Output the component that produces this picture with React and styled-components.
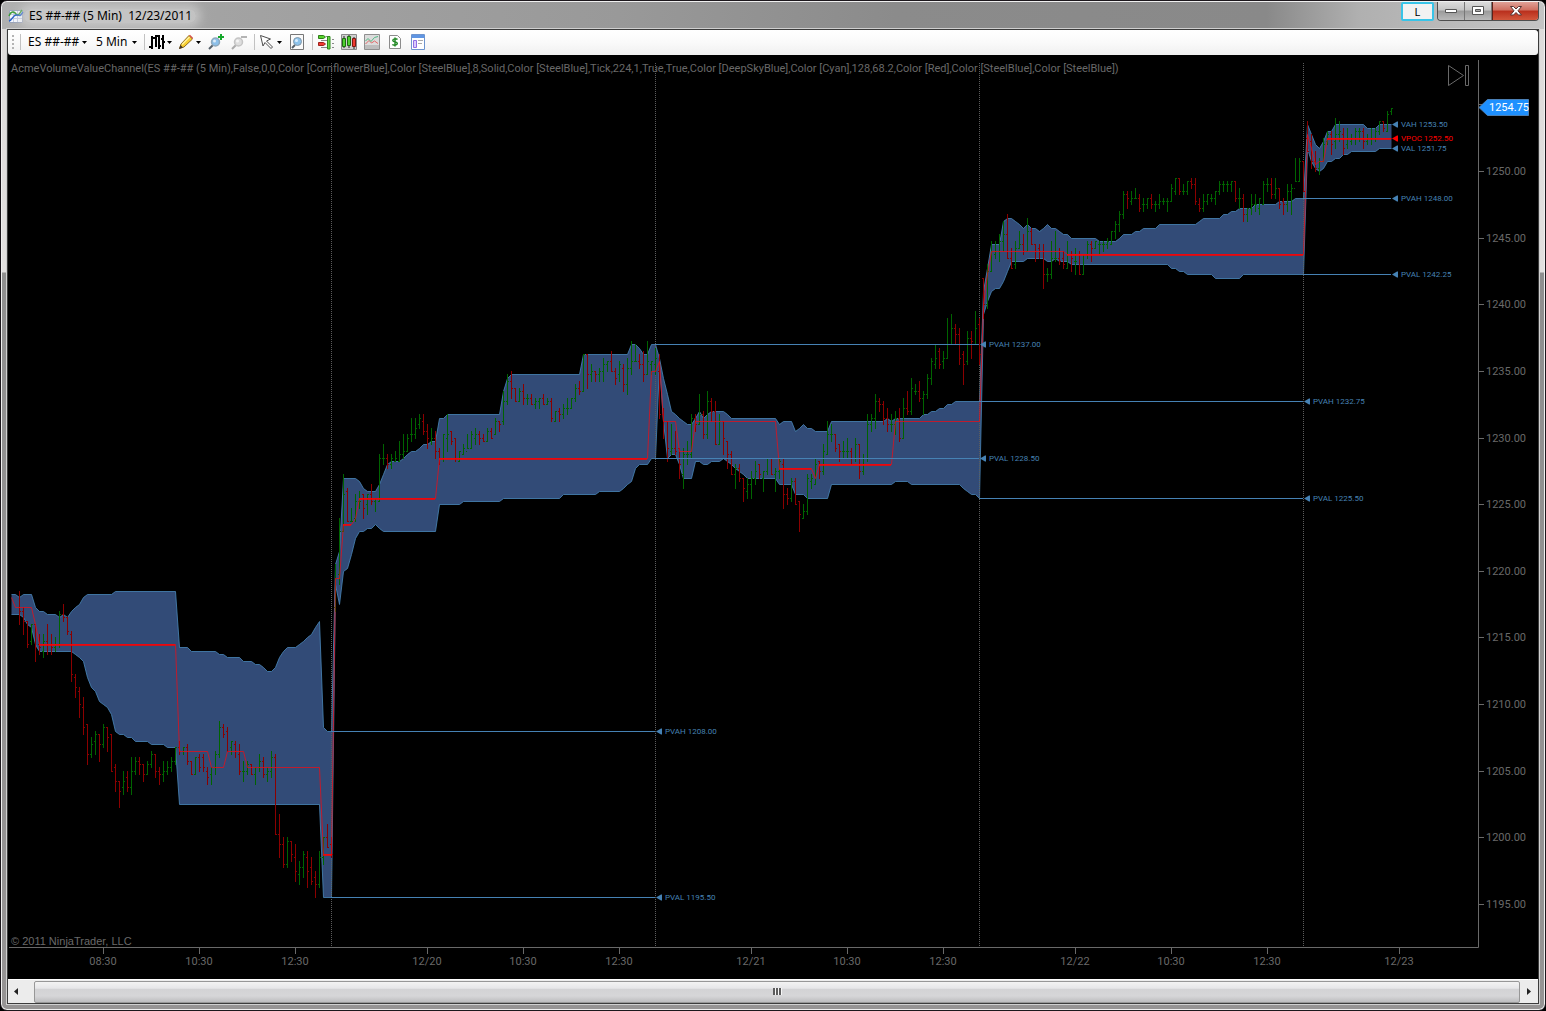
import styled, { createGlobalStyle } from 'styled-components';

const GRAY = '#696969';
const STEEL = '#4682b4';
const BAR_STEP = 4;
const POINT_HEIGHT = 13.328;

const INDICATOR =
  'AcmeVolumeValueChannel(ES ##-## (5 Min),False,0,0,Color [CornflowerBlue],Color [SteelBlue],8,Solid,Color [SteelBlue],Tick,224,1,True,True,Color [DeepSkyBlue],Color [Cyan],128,68.2,Color [Red],Color [SteelBlue],Color [SteelBlue])';

// Each session holds its prices as ticks (0.25) below `base`.
// bars: high low open close, channel lines: x:ticks
const sessions = [
  {
    base: 1220,
    start: 19,
    bars: `6 16 11 12,11 19 12 15,15 23 15 22,16 22 21 16,16 27 16 23,19 25 22 23,19 26 24 21,16 25 21 22,19 25 22 23,20 24 23 22,
      12 23 22 13,10 15 13 14,14 19 14 18,18 33 19 31,31 38 32 35,35 44 36 40,38 49 41 47,46 58 46 55,50 56 55 52,48 55 51 49,
      49 57 49 52,46 53 52 47,47 54 47 50,49 60 49 60,58 66 59 63,63 71 63 66,60 67 65 63,60 66 62 65,56 67 65 60,56 61 60 57,
      56 61 57 58,58 63 58 61,57 61 61 58,54 59 58 55,55 62 55 60,59 64 60 61,57 63 61 60,57 61 60 59,56 60 59 57,53 58 57 53,
      51 55 53 54,53 55 54 53,52 58 53 57,57 61 57 61,56 61 61 56,55 60 56 59,55 60 56 59,59 64 60 62,59 64 61 59,54 61 59 55,
      45 56 55 47,46 50 47 49,47 54 48 54,51 55 53 51,51 56 52 54,52 61 55 60,57 63 60 60,57 61 60 58,58 61 58 61,59 64 61 59,
      55 60 59 57,56 62 57 61,59 63 61 60,54 62 60 56,55 79 56 79,73 86 79 82,80 89 82 88,80 89 88 81,81 87 81 85,82 93 86 90,
      87 94 91 89,84 92 89 85,84 95 86 90,86 94 89 93,90 98 92 94,84 95 94 86,80 88 86 80,76 83 80 83,80 86 82 85`,
    upper:
      '11:7 15:7 19:8 23:7 31:7 35:11 39:12 43:12 47:13 55:13 59:14 63:13 67:14 71:12 75:11 79:10 83:8 87:7 111:7 115:6 175:6 179:23 187:23 191:24 215:24 219:25 223:25 227:26 239:26 243:27 251:27 255:28 259:28 263:29 267:30 271:30 275:29 279:26 283:24 287:23 295:23 299:22 303:21 307:20 311:19 315:17 319:15 323:47 327:48 331:48',
    lower:
      '11:13 19:13 23:14 27:16 31:17 35:22 39:24 71:24 75:25 79:26 83:27 87:32 91:35 95:36 99:39 103:40 107:41 111:43 115:48 119:49 123:49 127:50 131:50 135:51 147:51 151:52 163:52 167:53 175:53 179:70 319:70 323:98 331:98',
    poc: '11:8 15:11 31:11 35:16 39:22 175:22 179:54 207:54 211:59 223:59 227:54 243:54 247:59 319:59 323:85 331:85',
    strong: ['39:22 175:22', '323:85 332:85'],
  },
  {
    base: 1238,
    start: 335,
    bars: `70 84 83 74,56 76 73 60,43 60 60 49,47 57 48 57,53 57 57 57,49 57 56 51,48 53 51 51,49 56 49 53,49 55 52 49,46 52 49 51,
      50 54 51 50,37 51 51 38,34 40 38 38,37 41 38 40,37 41 40 38,36 39 39 38,33 39 39 37,31 38 37 36,31 36 36 32,26 33 31 31,
      26 32 31 29,25 29 28 26,25 31 27 30,28 35 30 32,29 34 33 32,30 38 32 36,35 40 36 38,31 39 38 31,25 36 32 31,30 34 30 33,
      32 39 32 38,36 39 39 36,34 37 37 35,31 35 36 35,30 35 35 31,29 34 32 31,30 34 31 32,31 33 32 33,29 33 33 30,29 32 30 32,
      26 31 31 27,27 30 27 28,18 28 27 21,13 22 21 15,12 20 15 17,17 21 17 21,17 21 21 18,16 22 18 20,19 22 20 20,19 22 20 22,
      20 23 22 21,20 23 21 20,19 22 20 22,20 22 22 21,20 27 21 26,24 27 27 24,23 27 24 25,22 26 25 23,20 25 23 23,20 23 23 20,
      16 21 20 17,15 19 17 18,7 18 18 7,7 17 7 13,10 15 13 12,12 15 12 13,11 15 13 12,8 15 12 10,9 12 10 9,6 12 9 12,
      11 16 12 14,9 15 13 10,10 18 11 16,8 19 16 11,3 13 11 9,4 9 9 9,7 11 9 10,6 15 10 13,3 13 13 9,9 13 10 9,5 13 10 8`,
    upper:
      '335:70 339:66 343:44 355:44 359:45 363:47 367:48 375:48 379:46 383:43 387:40 391:39 399:39 403:38 407:37 411:36 415:36 419:35 423:34 427:34 431:33 435:33 439:26 443:26 447:25 499:25 503:18 507:14 511:13 579:13 583:7 627:7 631:4 635:4 639:5 643:7 647:7 651:4 655:4',
    lower:
      '335:76 339:82 343:72 347:71 351:67 355:62 359:60 363:60 367:59 371:59 375:58 379:59 383:60 435:60 439:52 459:52 463:51 499:51 503:50 559:50 563:49 595:49 599:48 619:48 623:47 627:46 631:45 635:41 639:40 647:40 651:38 655:38',
    poc: '335:74 339:74 343:58 351:58 355:56 359:50 435:50 439:38 647:38 651:12 655:12',
    strong: ['343:58 351:58', '359:50 435:50', '439:38 647:38'],
  },
  {
    base: 1238,
    start: 659,
    bars: `7 26 12 25,23 32 25 27,27 39 27 35,28 37 36 35,30 37 35 36,35 44 35 40,35 47 43 37,33 40 37 37,25 38 37 26,25 30 26 28,
      19 28 28 25,24 32 25 31,18 32 31 21,20 27 21 24,21 34 24 34,25 34 34 27,27 37 27 32,33 41 33 37,36 43 37 43,40 47 43 41,
      40 45 41 44,44 51 44 47,44 50 48 46,42 50 46 44,39 46 44 42,40 44 40 43,42 48 44 42,38 43 42 38,38 43 38 43,41 48 43 42,
      38 44 42 39,38 53 40 49,47 52 49 50,44 51 50 45,44 52 45 52,51 60 51 55,52 56 56 54,43 55 54 44,43 47 45 44,38 46 46 40,
      39 44 39 42,34 43 42 36,27 37 37 31,28 33 31 31,31 36 31 35,34 39 34 36,33 38 36 36,32 38 36 36,35 40 36 38,32 39 38 34,
      34 44 34 42,37 43 42 38,25 39 38 28,25 30 28 26,19 29 26 21,20 24 21 22,21 28 22 26,23 30 26 28,25 30 28 28,24 31 28 26,
      23 33 26 32,20 32 32 23,18 25 23 24,14 25 24 17,16 19 18 18,15 21 18 20,18 25 20 19,13 20 19 14,8 16 14 9,4 11 10 8,
      5 11 6 10,6 11 9 8,-4 8 8 4,-5 4 4 -1,-2 4 -1 1,-1 10 1 8,6 16 7 10,0 10 9 2,0 8 2 3,-6 4 4 -1,-4 10 -2 7`,
    upper:
      '659:8 663:14 667:19 671:24 675:25 679:26 683:27 687:28 691:28 695:26 699:24 703:26 707:25 711:24 723:24 727:25 731:26 775:26 779:28 783:27 791:27 795:30 799:29 803:28 807:29 811:29 815:30 827:30 831:27 883:27 887:26 891:27 895:26 919:26 923:25 927:25 931:24 935:24 939:23 943:23 947:22 951:22 955:21 979:21',
    lower:
      '659:10 663:27 667:38 671:37 675:37 679:40 683:44 691:44 695:39 699:39 703:40 707:40 711:39 719:39 723:38 727:39 731:40 735:41 739:42 743:43 747:44 775:44 779:46 791:46 795:49 803:49 807:50 827:50 831:46 891:46 895:45 907:45 911:46 959:46 963:47 967:48 971:49 975:49 979:50',
    poc: '659:9 663:27 675:27 679:36 691:36 695:27 775:27 779:41 811:41 815:44 819:40 891:40 895:27 979:27',
    strong: ['779:41 811:41', '819:40 891:40'],
  },
  {
    base: 1250,
    start: 983,
    bars: `32 44 32 40,28 41 40 30,21 30 30 24,21 26 25 24,19 27 24 21,15 24 21 19,13 26 19 26,23 29 26 29,21 29 28 23,18 23 23 22,
      19 25 22 24,14 24 24 18,17 22 18 22,22 27 22 24,22 26 23 24,22 35 24 31,29 33 31 31,21 32 31 26,18 27 26 26,23 28 26 27,
      24 29 26 28,21 29 29 25,24 30 25 26,23 31 27 27,24 31 25 31,25 31 31 25,21 26 25 22,21 27 22 23,21 23 23 21,21 25 22 22,
      21 24 22 22,20 23 22 21,18 22 22 18,15 20 18 16,12 18 16 13,6 14 13 7,6 11 7 8,6 10 9 8,5 8 8 8,7 12 8 11,
      8 12 10 10,8 11 10 8,7 11 8 10,9 12 10 10,7 11 10 9,8 10 9 9,8 12 9 9,4 9 9 5,2 7 6 2,2 7 2 6,
      4 7 6 6,3 7 6 3,2 5 3 4,2 10 4 9,8 12 10 11,7 12 11 9,7 10 9 7,7 9 8 8,6 10 8 6,3 7 6 4,
      3 6 4 4,3 6 4 4,3 6 4 3,3 9 3 8,5 11 8 8,7 15 8 13,11 15 13 11,7 13 11 10,7 12 10 10,8 13 11 8,
      3 10 10 4,2 6 4 4,2 8 4 7,2 8 7 5,5 11 5 10,8 13 9 10,4 12 10 6,4 13 6 5,-4 3 5 3,-4 3 3 -3,-3 6 -3 6`,
    upper:
      '983:36 987:29 991:22 999:22 1003:15 1007:14 1011:14 1015:15 1019:16 1023:17 1027:16 1031:17 1035:17 1039:18 1043:17 1047:16 1051:17 1055:17 1059:18 1063:19 1067:19 1071:20 1095:20 1099:21 1115:21 1119:20 1123:19 1131:19 1135:18 1139:18 1143:17 1155:17 1159:16 1195:16 1199:15 1203:14 1219:14 1223:13 1227:13 1231:12 1235:12 1239:11 1251:11 1255:10 1275:10 1279:9 1291:9 1295:8 1303:8',
    lower:
      '983:43 987:39 991:36 995:35 999:35 1003:33 1007:30 1011:27 1023:27 1027:26 1043:26 1047:27 1051:27 1055:26 1059:27 1067:27 1071:28 1167:28 1171:29 1175:29 1179:30 1183:30 1187:31 1211:31 1215:32 1239:32 1243:31 1303:31',
    poc: '983:40 987:31 991:24 1063:24 1067:25 1303:25',
    strong: ['1067:25 1303:25'],
  },
  {
    base: 1262.5,
    start: 1307,
    bars: `35 44 40 44,39 49 41 47,44 50 47 49,46 51 49 47,40 47 47 42,38 42 41 39,38 45 39 42,34 43 41 39,35 41 39 38,37 45 39 43,
      37 43 42 40,39 42 41 40,37 42 40 38,37 41 38 38,37 43 38 41,39 42 41 40,37 42 40 40,37 41 40 38,35 39 38 35,35 38 35 37,
      32 38 38 33,31 33 32 31`,
    upper: '1307:36 1311:39 1315:42 1319:43 1323:41 1327:38 1331:38 1335:36 1363:36 1367:37 1375:37 1379:36 1391:36',
    lower:
      '1307:43 1311:47 1315:49 1319:50 1323:49 1327:47 1331:47 1335:46 1339:46 1343:45 1347:45 1351:44 1375:44 1379:43 1391:43',
    poc: '1307:39 1311:43 1315:48 1319:47 1323:47 1327:40 1391:40',
    strong: ['1327:40 1391:40'],
  },
];

const levels = [
  { from: 331, to: 655, price: 1208, label: 'PVAH 1208.00' },
  { from: 331, to: 655, price: 1195.5, label: 'PVAL 1195.50' },
  { from: 655, to: 979, price: 1237, label: 'PVAH 1237.00' },
  { from: 655, to: 979, price: 1228.5, label: 'PVAL 1228.50' },
  { from: 979, to: 1303, price: 1232.75, label: 'PVAH 1232.75' },
  { from: 979, to: 1303, price: 1225.5, label: 'PVAL 1225.50' },
  { from: 1303, to: 1391, price: 1248, label: 'PVAH 1248.00' },
  { from: 1303, to: 1391, price: 1242.25, label: 'PVAL 1242.25' },
  { from: 1391, to: 1391, price: 1253.5, label: 'VAH 1253.50' },
  { from: 1391, to: 1391, price: 1252.5, label: 'VPOC 1252.50', color: '#ff0000' },
  { from: 1391, to: 1391, price: 1251.75, label: 'VAL 1251.75' },
];

const prices = [1250, 1245, 1240, 1235, 1230, 1225, 1220, 1215, 1210, 1205, 1200, 1195];

const times = [
  [103, '08:30'],
  [199, '10:30'],
  [295, '12:30'],
  [427, '12/20'],
  [523, '10:30'],
  [619, '12:30'],
  [751, '12/21'],
  [847, '10:30'],
  [943, '12:30'],
  [1075, '12/22'],
  [1171, '10:30'],
  [1267, '12:30'],
  [1399, '12/23'],
];

function priceY(price) {
  return Math.round(171 + (1250 - price) * POINT_HEIGHT);
}

function parseLine(line, base) {
  return line.split(' ').map((point) => {
    const [x, ticks] = point.split(':').map(Number);
    return [x, priceY(base - ticks / 4)];
  });
}

function toPoints(points) {
  return points.map(([x, y]) => `${x + 0.5},${y + 0.5}`).join(' ');
}

function joinLines(key) {
  return sessions.flatMap((session) => parseLine(session[key], session.base));
}

function barPaths() {
  const paths = { up: '', down: '' };
  sessions.forEach(({ bars, base, start }) => {
    bars.split(',').forEach((bar, index) => {
      const [high, low, open, close] = bar
        .trim()
        .split(' ')
        .map((ticks) => priceY(base - ticks / 4));
      const x = start + index * BAR_STEP;
      const path = `M${x} ${high}h1V${low + 1}h-1zM${x - 1} ${open}h1v1h-1zM${x + 1} ${close}h1v1h-1z`;
      paths[close <= open ? 'up' : 'down'] += path;
    });
  });
  return paths;
}

function Chart() {
  const upper = joinLines('upper');
  const lower = joinLines('lower');
  const poc = joinLines('poc');
  const bars = barPaths();

  return (
    <ChartSvg viewBox="8 55 1530 924" role="img" aria-label="ES 5 Min chart">
      <polygon points={toPoints([...upper, ...[...lower].reverse()])} fill="#6495ed" fillOpacity="0.5" />
      <polyline points={toPoints(upper)} fill="none" stroke={STEEL} strokeOpacity="0.85" />
      <polyline points={toPoints(lower)} fill="none" stroke={STEEL} strokeOpacity="0.85" />

      {[331, 655, 979, 1303].map((x) => (
        <path key={x} d={`M${x + 0.5} 63V947`} stroke="#5c5c5c" strokeDasharray="1 1" shapeRendering="crispEdges" />
      ))}

      <path d={bars.up} fill="#006400" shapeRendering="crispEdges" />
      <path d={bars.down} fill="#8b0000" shapeRendering="crispEdges" />

      <polyline points={toPoints(poc)} fill="none" stroke="#e1101c" strokeOpacity="0.8" />
      {sessions.map(({ strong, base }) =>
        strong.map((line) => {
          const [[x1, y], [x2]] = parseLine(line, base);
          return <rect key={line} x={x1} y={y} width={x2 - x1} height="2" fill="#ff0000" fillOpacity="0.75" />;
        }),
      )}

      {levels.map(({ from, to, price, label, color = STEEL }) => {
        const y = priceY(price);
        return (
          <g key={label} fill={color}>
            <rect x={from} y={y} width={to - from} height="1" />
            <path d={`M${to + 1} ${y + 0.5}l5 -3h1v6h-1z`} />
            <SmallText x={to + 10} y={y + 3}>
              {label}
            </SmallText>
          </g>
        );
      })}

      <path d="M9 947.5H1478.5V60" fill="none" stroke={GRAY} />
      <path d="M1478 104.5h6" stroke={GRAY} />
      {prices.map((price) => (
        <g key={price}>
          <path d={`M1478 ${priceY(price) + 0.5}h6`} stroke={GRAY} />
          <AxisText x="1486" y={priceY(price) + 4}>
            {price.toFixed(2)}
          </AxisText>
        </g>
      ))}
      {times.map(([x, label]) => (
        <g key={x}>
          <path d={`M${x + 0.5} 948v6`} stroke={GRAY} />
          <AxisText x={x} y="965" textAnchor="middle">
            {label}
          </AxisText>
        </g>
      ))}

      <path d="M1479 107.5L1487.500 99.500H1528.500V115.500H1487.500Z" fill="#1e90ff" stroke="#4a7fb5" />
      <AxisText x="1489" y="111" fill="#ffffff">
        1254.75
      </AxisText>
      <path d="M1448.500 65.500V85.500L1463.500 75.500ZM1465.500 65.500H1468.500V85.500H1465.500Z" fill="none" stroke={GRAY} />

      <AxisText x="11" y="72">
        {INDICATOR}
      </AxisText>
      <CopyrightText x="11" y="945">
        © 2011 NinjaTrader, LLC
      </CopyrightText>
    </ChartSvg>
  );
}

function Icon({ children }) {
  return (
    <svg width="16" height="16" viewBox="0 0 16 16" fill="none" aria-hidden="true">
      {children}
    </svg>
  );
}

function Caret() {
  return (
    <svg width="5" height="3" viewBox="0 0 5 3" aria-hidden="true">
      <path d="M0 0h5L2.500 3z" fill="#000" />
    </svg>
  );
}

function AppIcon() {
  return (
    <Icon>
      <path d="M1.500 2.500h13v12h-13z" fill="#f4f7fd" stroke="#9aa3b8" />
      <path d="M5.500 3v11M9.500 3v11M2 6.500h12M2 10.500h12" stroke="#c3cce0" />
      <path d="M1 8C3 3 6 3 8 6s4-1 6-4" stroke="#3b9c35" strokeWidth="1.500" />
      <path d="M1 13C5 12 5 6 9 7s3 1 6-3" stroke="#2862c8" strokeWidth="1.500" />
    </Icon>
  );
}

function BarsIcon() {
  return (
    <Icon>
      <path d="M2 2h2v13H2zM6 1h2v12H6zM13 1h2v14h-2z" fill="#000" />
      <path d="M0 12h2v2H0zM4 3h2v2H4zM8 1h3v2H8zM9 2h2v13H9zM11 11h1v2h-1zM12 4h1v2h-1zM15 7h1v2h-1z" fill="#000" />
    </Icon>
  );
}

function PencilIcon() {
  return (
    <Icon>
      <path d="M1.500 14.500l1.500-4.500L11 1.500l3.500 3.500L6 13z" fill="#f8cf32" stroke="#8d6a20" />
      <path d="M4 10.500L11.500 3" stroke="#fff2a0" strokeWidth="1.500" />
      <path d="M11 1.500l1-.7 3 3-.7 1.200z" fill="#d65048" />
      <path d="M1 15l1.500-4 2.500 2.500z" fill="#44372a" />
    </Icon>
  );
}

function MagnifierIcon({ disabled, sign }) {
  const ring = disabled ? '#c4c4c4' : '#8fa9bd';
  return (
    <Icon>
      <path d="M1 15l4-4" stroke={disabled ? '#aaa' : '#55606a'} strokeWidth="2" />
      <circle cx="7.500" cy="8" r="4" fill={disabled ? '#dedede' : '#8cc0ea'} stroke={ring} strokeWidth="1.500" />
      <circle cx="6.500" cy="7" r="1.500" fill="#fff" fillOpacity="0.7" />
      {sign === 'plus' && <path d="M13 0v6M10 3h6" stroke="#16a82c" strokeWidth="2" />}
      {sign === 'minus' && <path d="M10 3h6" stroke="#b4b4b4" strokeWidth="2" />}
    </Icon>
  );
}

function PointerIcon() {
  return (
    <Icon>
      <path d="M1.500 1.500l10 3.500-4 2 6 6-1.500 1.500-6-6L4 12z" fill="#fff" stroke="#4d4d4d" />
    </Icon>
  );
}

function DataBoxIcon() {
  return (
    <Icon>
      <path d="M1.500.5h13v15h-13z" fill="#fafafa" stroke="#777" />
      <path d="M3 14l3-3" stroke="#55606a" strokeWidth="2" />
      <circle cx="8.500" cy="7.500" r="4" fill="#8cc3ec" stroke="#8498a8" />
      <circle cx="7.500" cy="6.500" r="1.500" fill="#d9efff" />
    </Icon>
  );
}

function OrdersIcon() {
  return (
    <Icon>
      <path d="M.5 1.500h5l2 1.500-2 1.500h-5z" fill="#55d62b" stroke="#317b1b" />
      <path d="M.5 8.500h5l2 1.500-2 1.500h-5z" fill="#f23a32" stroke="#9c211b" />
      <path d="M8 2.500h4M3 6.500h6M3 13.500h6M14 5.500h2M14 9.500h2M14 13.500h2" stroke="#888" />
      <path d="M9.500 2.500h2.500v12.500H9.500z" fill="#66d647" stroke="#2c8a1b" />
    </Icon>
  );
}

function CandlesIcon() {
  return (
    <Icon>
      <path d="M.5.500h15v15H.5z" fill="#cfcfcf" stroke="#8a8a8a" />
      <path d="M3 2v12M8 1v13M13 3v12" stroke="#222" />
      <path d="M1.500 4.500h3v8h-3z" fill="#4ed12f" stroke="#1f6b12" />
      <path d="M6.500 2.500h3v9h-3z" fill="#4ed12f" stroke="#1f6b12" />
      <path d="M11.500 4.500h3v8h-3z" fill="#ef3b30" stroke="#7d1712" />
    </Icon>
  );
}

function IndicatorIcon() {
  return (
    <Icon>
      <path d="M.5.500h15v15H.5z" fill="#dcdcdc" stroke="#8f8f8f" />
      <path d="M1 11h14v4H1z" fill="#bdbdbd" />
      <path d="M1.500 10L5 6.500 7.500 9l3-2L14 9.500" stroke="#e16a68" />
      <path d="M1.500 7L4 4.500l3 3 3.500-4L14 2.500" stroke="#51b884" />
    </Icon>
  );
}

function DollarIcon() {
  return (
    <Icon>
      <path d="M2.500 1.500h8l3 3v10h-11z" fill="#fff" stroke="#8c8c8c" />
      <path d="M10.500 5.500C9.500 4.500 5.800 4.500 5.800 6.500S10.300 7.600 10.300 9.500 6.500 11.500 5.300 10.500M8 3.500v9" stroke="#248a27" strokeWidth="1.500" />
    </Icon>
  );
}

function PropertiesIcon() {
  return (
    <Icon>
      <path d="M1.500.5h13v15h-13z" fill="#fff" stroke="#6d94ce" />
      <path d="M2 1h12v3H2z" fill="#5f95e3" />
      <path d="M3.500 6.500h3v7h-3z" fill="#d9cbfa" stroke="#8f6ee6" />
      <path d="M8 6.500h5M8 9.500h4" stroke="#aaa" />
    </Icon>
  );
}

export default function App() {
  return (
    <>
      <GlobalStyle />
      <Window>
        <TitleBar>
          <AppIcon />
          <Title>ES ##-## (5 Min)&nbsp; 12/23/2011</Title>
          <LinkButton type="button">L</LinkButton>
          <CaptionButtons>
            <CaptionButton type="button" aria-label="Minimize">
              <svg width="12" height="5" viewBox="0 0 12 5">
                <path d="M.5.500h11v3H.5z" fill="#fff" stroke="#555" />
              </svg>
            </CaptionButton>
            <CaptionButton type="button" aria-label="Maximize">
              <svg width="12" height="10" viewBox="0 0 12 10">
                <path d="M.5.500h11v8H.5z" fill="#fff" stroke="#555" />
                <path d="M3.500 3.500h5v2h-5z" fill="#aaa" stroke="#555" />
              </svg>
            </CaptionButton>
            <CaptionButton type="button" aria-label="Close" $close>
              <svg width="12" height="10" viewBox="0 0 12 10">
                <path d="M.5.500h3L6 3 8.500.5h3L8 4.800l3.500 4.200h-3L6 6.500 3.500 9h-3L4 4.800z" fill="#fff" stroke="#533" />
              </svg>
            </CaptionButton>
          </CaptionButtons>
        </TitleBar>
        <Client>
          <Toolbar>
            <Grip />
            <Separator />
            <DropField $width="68px">
              <select aria-label="Instrument">
                <option>ES ##-##</option>
              </select>
              <Caret />
            </DropField>
            <DropField $width="50px">
              <select aria-label="Interval">
                <option>5 Min</option>
              </select>
              <Caret />
            </DropField>
            <Separator />
            <DropButton type="button" aria-label="Chart style">
              <BarsIcon />
              <Caret />
            </DropButton>
            <DropButton type="button" aria-label="Drawing tools">
              <PencilIcon />
              <Caret />
            </DropButton>
            <ToolButton type="button" aria-label="Zoom in">
              <MagnifierIcon sign="plus" />
            </ToolButton>
            <ToolButton type="button" aria-label="Zoom out">
              <MagnifierIcon sign="minus" disabled />
            </ToolButton>
            <Separator />
            <DropButton type="button" aria-label="Cursor">
              <PointerIcon />
              <Caret />
            </DropButton>
            <ToolButton type="button" aria-label="Data box">
              <DataBoxIcon />
            </ToolButton>
            <Separator />
            <ToolButton type="button" aria-label="Chart trader">
              <OrdersIcon />
            </ToolButton>
            <ToolButton type="button" aria-label="Data series">
              <CandlesIcon />
            </ToolButton>
            <ToolButton type="button" aria-label="Indicators">
              <IndicatorIcon />
            </ToolButton>
            <ToolButton type="button" aria-label="Strategies">
              <DollarIcon />
            </ToolButton>
            <ToolButton type="button" aria-label="Properties">
              <PropertiesIcon />
            </ToolButton>
          </Toolbar>
          <Chart />
          <ScrollBar>
            <ScrollButton type="button" aria-label="Scroll left">
              <svg width="4" height="7" viewBox="0 0 4 7">
                <path d="M4 0v7L0 3.500z" fill="#222" />
              </svg>
            </ScrollButton>
            <Thumb>
              <svg width="9" height="7" viewBox="0 0 9 7">
                <path d="M0 0h2v7H0zM3 0h2v7H3zM6 0h2v7H6z" fill="#5c5c5c" />
                <path d="M2.500 0v7M5.500 0v7M8.500 0v7" stroke="#f7f7f7" />
              </svg>
            </Thumb>
            <ScrollButton type="button" aria-label="Scroll right" $narrow>
              <svg width="4" height="7" viewBox="0 0 4 7">
                <path d="M0 0v7l4-3.500z" fill="#222" />
              </svg>
            </ScrollButton>
          </ScrollBar>
        </Client>
      </Window>
    </>
  );
}

const GlobalStyle = createGlobalStyle`
  * {
    box-sizing: border-box;
  }

  body {
    margin: 0;
    background: #000;
    font-family: 'Noto Sans', sans-serif;
    font-size: 12px;
  }

  button,
  select {
    margin: 0;
    padding: 0;
    border: none;
    background: none;
    color: #000;
    font-family: inherit;
    font-size: 12px;
  }
`;

const Window = styled.div`
  display: flex;
  flex-direction: column;
  min-height: 100vh;
  padding: 0 5px 5px;
  border: 1px solid #1c171c;
  border-radius: 7px;
  box-shadow: inset 0 0 0 1px #f0f0f0;
  background: linear-gradient(#dddbda 0, #e2e0df 271px, #8f8f8f 272px, #969494 100%);
`;

const TitleBar = styled.header`
  display: flex;
  align-items: center;
  height: 27px;
  margin: 1px -4px 0;
  padding: 0 5px 0 6px;
  border-radius: 5px 5px 0 0;
  background: linear-gradient(90deg, #b0b0b0 0, #a3a3a3 14%, #999 40%, #8b8b8b 58%, #898989 82%, #b0b0b0 88%, #c4c4c4 100%);
`;

const Title = styled.h1`
  margin: 0 auto 0 0;
  padding: 0 4px 0 5px;
  border-radius: 12px;
  background: rgba(215, 215, 215, 0.6);
  box-shadow: 0 0 10px 5px rgba(215, 215, 215, 0.6);
  font-size: 12px;
  font-weight: 400;
  line-height: 14px;
`;

const LinkButton = styled.button`
  align-self: flex-start;
  width: 33px;
  height: 19px;
  margin-right: 3px;
  border: 2px solid #38c4e8;
  border-radius: 2px;
  background: #f2f2f2;
  font-size: 11px;
  line-height: 14px;
`;

const CaptionButtons = styled.div`
  display: flex;
  align-self: flex-start;
  height: 19px;
  border: 1px solid #4e4e4e;
  border-top: none;
  border-radius: 0 0 4px 4px;
  overflow: hidden;
`;

const CaptionButton = styled.button`
  display: flex;
  align-items: center;
  justify-content: center;
  width: ${({ $close }) => ($close ? '46px' : '27px')};
  border-left: ${({ $close }) => ($close ? '1px solid #5c2018' : 'none')};
  border-right: ${({ $close }) => ($close ? 'none' : '1px solid #777')};
  background: ${({ $close }) =>
    $close
      ? 'linear-gradient(#e0a197 0, #cf6f60 45%, #b92f1c 50%, #d2573c 100%)'
      : 'linear-gradient(#dcdcdc 0, #c4c4c4 45%, #9a9a9a 50%, #b9b9b9 100%)'};
`;

const Client = styled.main`
  display: flex;
  flex: 1;
  flex-direction: column;
  border: 1px solid #3c3c3c;
  outline: 1px solid #d0d0d0;
  margin: 0 1px 1px;
  background: #000;
`;

const Toolbar = styled.nav`
  display: flex;
  align-items: center;
  height: 25px;
  padding: 0 0 1px 4px;
  border-radius: 0 3px 3px 3px;
  background: linear-gradient(#fff, #fafafa 50%, #f0f0f0);
`;

const Grip = styled.span`
  width: 2px;
  height: 14px;
  margin-right: 3px;
  background: repeating-linear-gradient(#b4b4b4 0 2px, transparent 2px 4px);
`;

const Separator = styled.span`
  width: 1px;
  height: 16px;
  margin: 0 2px 0 3px;
  background: #c2c2c2;
`;

const DropField = styled.span`
  display: flex;
  align-items: center;
  justify-content: space-between;
  width: ${({ $width }) => $width};
  padding: 0 4px 0 5px;

  select {
    appearance: none;
    line-height: 16px;
  }
`;

const ToolButton = styled.button`
  display: flex;
  align-items: center;
  width: 23px;
  height: 22px;
  padding-left: 3px;
`;

const DropButton = styled(ToolButton)`
  gap: 2px;
  width: 29px;
  padding-left: 2px;
`;

const ChartSvg = styled.svg`
  display: block;
  width: 100%;
  height: auto;
  background: #000;
`;

const AxisText = styled.text`
  fill: ${({ fill }) => fill || GRAY};
  font-family: Roboto, sans-serif;
  font-size: 11px;
`;

const SmallText = styled.text`
  font-family: Roboto, sans-serif;
  font-size: 8px;
`;

const CopyrightText = styled.text`
  fill: ${GRAY};
  font-family: 'Liberation Sans', sans-serif;
  font-size: 11px;
`;

const ScrollBar = styled.div`
  display: flex;
  align-items: center;
  height: 24px;
  margin-top: auto;
  border-top: 1px solid #fff;
  background: #ececec;
`;

const ScrollButton = styled.button`
  display: flex;
  align-items: center;
  justify-content: ${({ $narrow }) => ($narrow ? 'center' : 'flex-start')};
  width: ${({ $narrow }) => ($narrow ? '18px' : '26px')};
  height: 22px;
  padding-left: ${({ $narrow }) => ($narrow ? '0' : '6px')};
`;

const Thumb = styled.div`
  display: flex;
  flex: 1;
  align-items: center;
  justify-content: center;
  height: 22px;
  border: 1px solid #979797;
  border-radius: 2px;
  background: linear-gradient(#f3f3f3 0, #e6e6e8 32%, #d3d3d5 34%, #d6d6d8 70%, #bdbdbf 100%);
`;
